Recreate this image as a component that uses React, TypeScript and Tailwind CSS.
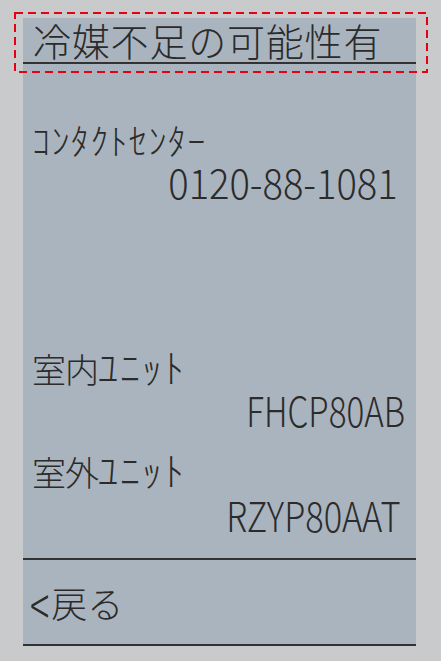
import React from "react";

const jp = "font-['Noto_Sans_CJK_JP',sans-serif] font-light";

const Code = ({ text, mt, pr, sx }: { text: string; mt: string; pr: string; sx: string }) => (
  <div className={`${mt} ${pr} h-[45px] flex justify-end`}>
    <span
      className={`${jp} ${sx} inline-block text-[41px] leading-[45px] origin-right whitespace-nowrap`}
    >
      {text}
    </span>
  </div>
);

const App = () => {
  return (
    <div className="relative w-[441px] h-[661px] bg-[#c8cacb] pt-[18px] px-[23px] text-[#2b2b2b]">
      <div className="w-[393px] bg-[#aab4be] flex flex-col">
        {/* header */}
        <div className="h-[46px] border-b-2 border-[#333] pl-[10px] flex items-center">
          <span className={`${jp} text-[38px] leading-[44px] tracking-[0.8px] whitespace-nowrap`}>
            冷媒不足の可能性有
          </span>
        </div>

        {/* body */}
        <div className="h-[494px] flex flex-col pl-[9px]">
          <div className={`${jp} mt-[57px] h-[36px] text-[36px] leading-[36px] tracking-[1.4px] whitespace-nowrap`}>
            ｺﾝﾀｸﾄｾﾝﾀｰ
          </div>
          <Code text="0120-88-1081" mt="mt-[2px]" pr="pr-[18px]" sx="scale-x-[0.93]" />

          <div className={`${jp} mt-[142px] h-[40px] text-[34px] leading-[40px] whitespace-nowrap`}>
            <span className="tracking-[-1px]">室内</span>
            <span className="text-[40px] tracking-[2px]">ﾕﾆｯﾄ</span>
          </div>
          <Code text="FHCP80AB" mt="mt-[1px]" pr="pr-[11px]" sx="scale-x-[0.81]" />

          <div className={`${jp} mt-[17px] h-[40px] text-[34px] leading-[40px] whitespace-nowrap`}>
            <span className="tracking-[-1px]">室外</span>
            <span className="text-[40px] tracking-[2px]">ﾕﾆｯﾄ</span>
          </div>
          <Code text="RZYP80AAT" mt="mt-[3px]" pr="pr-[15px]" sx="scale-x-[0.84]" />
        </div>

        {/* footer */}
        <div className="h-[88px] border-t-2 border-b-2 border-[#333] pl-[7px] flex items-center">
          <span className={`${jp} text-[36px] leading-[40px] whitespace-nowrap`}>
            <span className="inline-block scale-y-[1.5] mr-[2px]">&lt;</span>戻る
          </span>
        </div>
      </div>

      {/* annotation box */}
      <svg className="absolute left-[14px] top-[12px]" width="414" height="61">
        <rect
          x="1"
          y="1"
          width="412"
          height="59"
          fill="none"
          stroke="#e60012"
          strokeWidth="2"
          strokeDasharray="8 5"
        />
      </svg>
    </div>
  );
};

export default App;
